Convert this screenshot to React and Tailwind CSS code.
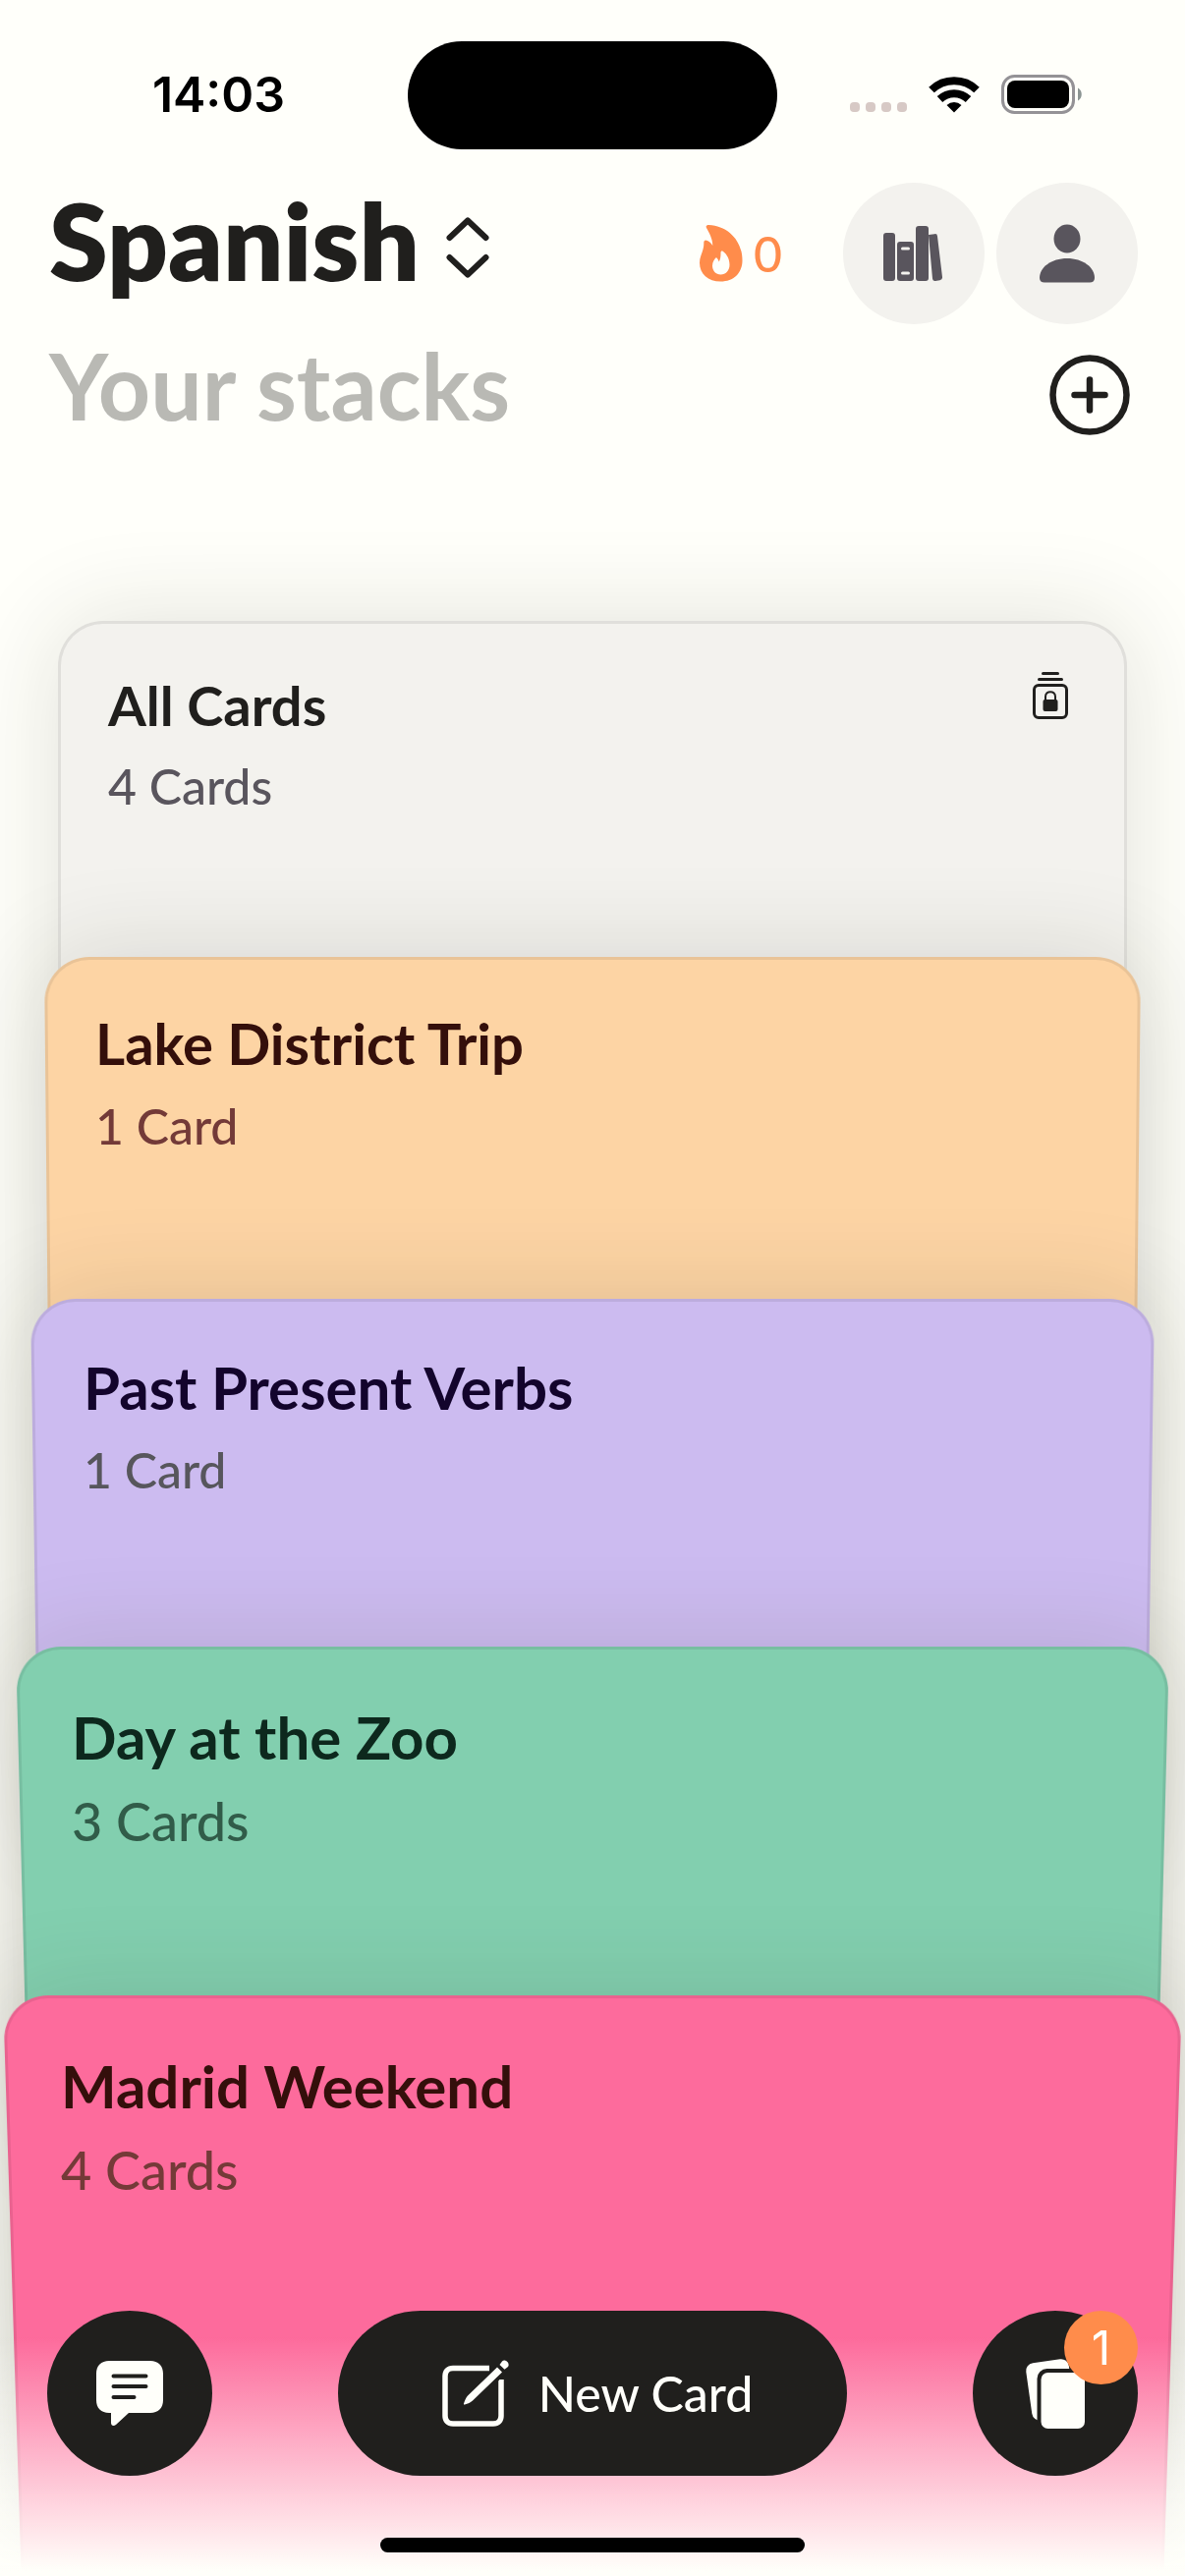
import React from "react";

const stacks = [
  {
    name: "All Cards",
    count: "4 Cards",
    locked: true,
    card: "h-[342px] mx-[59px] px-[51px] pt-[46px]",
    sheet: "bg-[#f3f2ee]",
    title: "text-[56px] text-[#201f1d]",
    sub: "text-[50px] leading-[84px] text-[#59555d]",
  },
  {
    name: "Lake District Trip",
    count: "1 Card",
    card: "h-[348px] mx-[45px] px-[52px] pt-[48px]",
    sheet: "bg-[#fdd4a4] [transform:perspective(2000px)_rotateX(-2deg)]",
    title: "text-[58px] text-[#340f0b]",
    sub: "text-[50px] leading-[88px] text-[#733a38]",
  },
  {
    name: "Past Present Verbs",
    count: "1 Card",
    card: "h-[354px] mx-[31px] px-[54px] pt-[50px]",
    sheet: "bg-[#ccbbf0] [transform:perspective(2000px)_rotateX(-3deg)]",
    title: "text-[60px] text-[#13042c]",
    sub: "text-[50px] leading-[88px] text-[#57565c]",
  },
  {
    name: "Day at the Zoo",
    count: "3 Cards",
    card: "h-[355px] mx-[16px] px-[57px] pt-[52px]",
    sheet: "bg-[#82cfaf] [transform:perspective(2000px)_rotateX(-5deg)]",
    title: "text-[60px] text-[#0d281d]",
    sub: "text-[54px] leading-[92px] text-[#315c49]",
  },
  {
    name: "Madrid Weekend",
    count: "4 Cards",
    card: "grow mx-[3px] px-[59px] pt-[52px]",
    sheet: "bg-[#fd6b9c] [transform:perspective(2000px)_rotateX(-6deg)]",
    title: "text-[60px] text-[#340f0b]",
    sub: "text-[54px] leading-[92px] text-[#743a38]",
  },
];

const WifiIcon = () => (
  <svg width="52" height="38" viewBox="0 0 52 38" fill="none" stroke="#000" strokeWidth="8">
    <path d="M3 14.5a33 33 0 0 1 46 0" />
    <path d="M11.5 24a21 21 0 0 1 29 0" />
    <path d="M18.5 30a11 11 0 0 1 15 0L26 37.500z" fill="#000" stroke="none" />
  </svg>
);

const BatteryIcon = () => (
  <svg width="84" height="40" viewBox="0 0 84 40">
    <rect x="1.5" y="1.5" width="72" height="37" rx="12" fill="none" stroke="#949296" strokeWidth="3" />
    <rect x="6" y="6" width="63" height="28" rx="8" fill="#000" />
    <path d="M78 13.5c5 2.500 5 10.500 0 13z" fill="#8b9492" />
  </svg>
);

const SortIcon = () => (
  <svg width="44" height="62" viewBox="0 0 44 62" fill="none" stroke="#201f1d" strokeWidth="6" strokeLinecap="round" strokeLinejoin="round">
    <path d="M3.500 21 22 3.500 40.500 21M3.500 41 22 58.500 40.500 41" />
  </svg>
);

const FlameIcon = () => (
  <svg width="44" height="58" viewBox="0 0 44 58" fill="#ff8c4b">
    <path
      fillRule="evenodd"
      d="M7 3C6 1 7 0 9.500 0 29 1 43.500 16 43.500 36c0 13-9 21.500-22 21.500C8.500 57.500 0 50 0 38.500 0 31 4.500 27 4.300 18c0-2.500 1.500-3.200 3.700-2 2.500 1.200 4.300 3.200 5.300 5C13.300 14 9.500 7.500 7 3zM21.500 28.500c0-2 1-2.500 2.500-1.500 4 3 6.500 8 6.500 13.500 0 6-4 10-9 10s-8.500-4-8.500-9c0-4 2-6.500 4-8.500 1.500 1.500 2.500 3 2.700 4.500 1.500-2.500 1.800-5 1.800-9z"
    />
  </svg>
);

const BooksIcon = () => (
  <svg width="62" height="58" viewBox="0 0 62 58" fill="#59555d">
    <rect x="0" y="8" width="12" height="49" rx="3" />
    <path
      fillRule="evenodd"
      d="M17 17h11a3 3 0 0 1 3 3v34a3 3 0 0 1-3 3H17a3 3 0 0 1-3-3V20a3 3 0 0 1 3-3zm2.500 5.500a1.500 1.500 0 0 0 0 3h6a1.500 1.500 0 0 0 0-3zm0 25a1.500 1.500 0 0 0 0 3h6a1.500 1.500 0 0 0 0-3z"
    />
    <rect x="33" y="1" width="13" height="56" rx="3" />
    <path d="m46 10 6-.8a2.500 2.500 0 0 1 3 2.300l5 41.500a3 3 0 0 1-2.500 3.300l-4.500.6a2.500 2.500 0 0 1-3-2.300z" />
  </svg>
);

const PersonIcon = () => (
  <svg width="58" height="60" viewBox="0 0 58 60" fill="#59555d">
    <ellipse cx="29" cy="15" rx="13.500" ry="14.500" />
    <path d="M1 55c0-11 12-20 28-20s28 9 28 20c0 3-2 4.500-5 4.500H6c-3 0-5-1.500-5-4.500z" />
  </svg>
);

const PlusCircleIcon = () => (
  <svg width="82" height="82" viewBox="0 0 82 82" fill="none" stroke="#201f1d" strokeWidth="6.500" strokeLinecap="round">
    <circle cx="41" cy="41" r="37.500" />
    <path d="M41 25.500v31M25.500 41h31" />
  </svg>
);

const LockedStackIcon = () => (
  <svg width="36" height="48" viewBox="0 0 36 48" fill="none" stroke="#201f1d" strokeLinecap="round">
    <path d="M10.500 1.500h15M6.500 7.500h23" strokeWidth="3" />
    <rect x="1.500" y="13.500" width="33" height="33" rx="4.500" strokeWidth="3" />
    <path d="M13 29v-4c0-6.500 10-6.500 10 0v4" strokeWidth="2" />
    <rect x="10.500" y="28" width="15" height="12" rx="2" fill="#201f1d" stroke="none" />
  </svg>
);

const ChatIcon = () => (
  <svg width="70" height="68" viewBox="0 0 70 68">
    <path
      d="M14 1h42c8 0 13 5 13 13v27c0 8-5 13-13 13H34L21 66c-2.500 2-5 1-5-2V54h-2C6 54 1 49 1 41V14C1 6 6 1 14 1z"
      fill="#fffffa"
    />
    <path d="M18.500 16.500h33M18.500 27h33M18.500 38h21" stroke="#201f1d" strokeWidth="4" strokeLinecap="round" />
  </svg>
);

const ComposeIcon = () => (
  <svg width="68" height="68" viewBox="0 0 68 68" fill="none">
    <path d="M48 8.500H11c-5 0-8 3-8 8V57c0 5 3 8 8 8h41c5 0 8-3 8-8V20" stroke="#fffffa" strokeWidth="5.500" />
    <path d="m24 43 35-36 4 4-35 36z" stroke="#201f1d" strokeWidth="6" />
    <path d="M56 7.500 61 12.500 31 41.500c-2 2-5 3-8 4-1 .3-1.300-.3-1-1 1-3 2-6 4-8z" fill="#fffffa" />
    <path d="m58.500 5 2.500-3.500c3-3 8.500 2 6 5.500L63.500 9.800z" fill="#fffffa" />
  </svg>
);

const CardsIcon = () => (
  <svg width="62" height="72" viewBox="0 0 62 72" fill="#fffffa">
    <rect x="4" y="3" width="44" height="59" rx="8" transform="rotate(-8 26 32)" />
    <rect x="12.500" y="11" width="52" height="64" rx="10" fill="#201f1d" />
    <rect x="16.500" y="15" width="44.500" height="57" rx="7" />
  </svg>
);

const StatusBar = () => (
  <div className="h-[156px] pt-[42px] grid grid-cols-[1fr_auto_1fr] font-['Inter',sans-serif]">
    <div className="h-[110px] pl-[30px] pb-[2px] flex items-center justify-center text-[50px] font-semibold text-black">
      <time>14:03</time>
    </div>
    <div className="w-[376px] h-[110px] rounded-full bg-black" />
    <div className="h-[110px] pl-[74px] pb-[2px] flex items-center">
      <div className="flex gap-[6px] pt-[26px]">
        {[0, 1, 2, 3].map((n) => (
          <span key={n} className="size-[10px] rounded-[4px] bg-[#d7c9c5]" />
        ))}
      </div>
      <div className="ml-[22px] flex items-center gap-[22px]">
        <WifiIcon />
        <BatteryIcon />
      </div>
    </div>
  </div>
);

const Header = () => (
  <header className="pl-[50px] pr-[48px]">
    <div className="h-[204px] pt-[30px] flex items-start">
      <button className="h-[132px] flex items-center gap-[27px]">
        <h1 className="pb-[16px] text-[108px] leading-[116px] font-extrabold text-[#201f1d]">Spanish</h1>
        <SortIcon />
      </button>
      <div className="ml-auto flex items-center gap-[12px]">
        <div className="mr-[50px] flex items-center gap-[11px] text-[50px] font-medium text-[#ff8c4b]">
          <FlameIcon />
          <span>0</span>
        </div>
        <button aria-label="Library" className="size-[144px] rounded-full bg-[#f3f2ee] flex items-center justify-center">
          <BooksIcon />
        </button>
        <button aria-label="Profile" className="size-[144px] rounded-full bg-[#f3f2ee] flex items-center justify-center">
          <PersonIcon />
        </button>
      </div>
    </div>
    <div className="pr-[8px] flex items-center justify-between">
      <h2 className="pb-[20px] text-[93px] leading-[64px] font-bold text-[#b9b9b4]">Your stacks</h2>
      <button aria-label="Add stack">
        <PlusCircleIcon />
      </button>
    </div>
  </header>
);

const StackCard = ({ stack }) => (
  <button className={`relative shrink-0 flex items-start justify-between text-left ${stack.card}`}>
    {/* the tilted sheet runs on underneath the cards below, so their shadows add up */}
    <span
      className={`absolute inset-x-0 top-0 -bottom-[900px] origin-top rounded-t-[46px] border-[3px] border-black/8 shadow-[0_0_100px_rgba(40,40,20,0.14)] ${stack.sheet}`}
    />
    <span className="relative flex flex-col">
      <span className={`leading-[80px] font-bold ${stack.title}`}>{stack.name}</span>
      <span className={`font-medium ${stack.sub}`}>{stack.count}</span>
    </span>
    {stack.locked && (
      <span className="relative pt-[6px] pr-[9px]">
        <LockedStackIcon />
      </span>
    )}
  </button>
);

const BottomBar = () => (
  <nav className="fixed inset-x-0 bottom-0 h-[270px] px-[48px] flex flex-col items-center bg-linear-to-b from-[#fffffa]/0 from-10% to-[#fffffa] to-98%">
    <div className="w-full flex items-center justify-between">
      <button aria-label="Chat" className="size-[168px] rounded-full bg-[#201f1d] flex items-center justify-center">
        <ChatIcon />
      </button>
      <button className="w-[518px] h-[168px] pl-[10px] rounded-full bg-[#201f1d] flex items-center justify-center gap-[30px] text-[50px] font-medium text-[#fffffa]">
        <ComposeIcon />
        New Card
      </button>
      <button aria-label="Review cards" className="relative size-[168px] rounded-full bg-[#201f1d] flex items-center justify-center">
        <CardsIcon />
        <span className="absolute top-0 right-0 size-[75px] rounded-full bg-[#ff8c4b] flex items-center justify-center font-['Inter',sans-serif] text-[48px] text-[#fffffa]">
          1
        </span>
      </button>
    </div>
    <div className="mt-auto mb-[24px] w-[432px] h-[15px] rounded-full bg-black" />
  </nav>
);

export default function App() {
  return (
    <div className="min-h-screen flex flex-col overflow-hidden bg-[#fffffa] font-['Lato',sans-serif]">
      <StatusBar />
      <Header />
      <main className="mt-[188px] grow flex flex-col">
        {stacks.map((stack) => (
          <StackCard key={stack.name} stack={stack} />
        ))}
      </main>
      <BottomBar />
    </div>
  );
}
